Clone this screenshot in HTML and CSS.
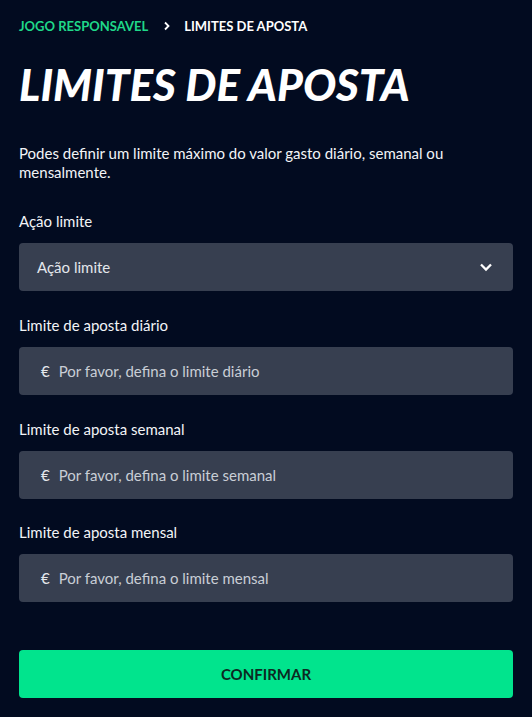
FILE: index.html
```html
<!DOCTYPE html>
<html lang="pt">
<head>
  <meta charset="UTF-8" />
  <meta name="viewport" content="width=device-width, initial-scale=1.0"/>
  <title>Limites de Aposta</title>
  <link rel="stylesheet" href="styles.css">
</head>
<body>

  <div class="page">
    <nav class="crumbs">
      <a href="#" class="crumb-link">Jogo Responsavel</a>
      <svg class="crumb-sep" width="10" height="10" viewBox="0 0 10 10">
        <path d="M3 1.5 L6.5 5 L3 8.5" fill="none" stroke="#ffffff" stroke-width="1.8"/>
      </svg>
      <span class="crumb-current">Limites de Aposta</span>
    </nav>

    <h1 class="title">Limites de Aposta</h1>

    <p class="intro">Podes definir um limite máximo do valor gasto diário, semanal ou mensalmente.</p>

    <form class="limits">
      <div class="field">
        <label class="field-label">Ação limite</label>
        <div class="select">
          <span>Ação limite</span>
          <svg width="14" height="14" viewBox="0 0 14 14">
            <path d="M2 4.5 L7 9.5 L12 4.5" fill="none" stroke="#ffffff" stroke-width="2.3"/>
          </svg>
        </div>
      </div>

      <div class="field">
        <label class="field-label">Limite de aposta diário</label>
        <div class="input">
          <span class="currency">€</span>
          <span class="placeholder">Por favor, defina o limite diário</span>
        </div>
      </div>

      <div class="field">
        <label class="field-label">Limite de aposta semanal</label>
        <div class="input">
          <span class="currency">€</span>
          <span class="placeholder">Por favor, defina o limite semanal</span>
        </div>
      </div>

      <div class="field">
        <label class="field-label">Limite de aposta mensal</label>
        <div class="input">
          <span class="currency">€</span>
          <span class="placeholder">Por favor, defina o limite mensal</span>
        </div>
      </div>

      <button type="button" class="confirm">Confirmar</button>
    </form>
  </div>

</body>
</html>
```

FILE: styles.css
```css
/* RESET & BASE */
* {
  box-sizing: border-box;
  margin: 0;
  padding: 0;
}

body {
  font-family: Lato, "Open Sans", sans-serif;
  background: #020b20;
  color: #ffffff;
}

.page {
  padding: 17px 19px 0 19px;
}

/* BREADCRUMB */
.crumbs {
  display: flex;
  align-items: center;
  height: 18px;
  font-size: 13px;
  font-weight: 700;
  text-transform: uppercase;
}

.crumb-link {
  color: #1fd889;
  text-decoration: none;
}

.crumb-sep {
  margin: 0 12px 0 14px;
}

.crumb-current {
  color: #ffffff;
}

/* TITLE */
.title {
  margin-top: 22px;
  font-size: 44px;
  line-height: 54px;
  font-weight: 900;
  font-style: italic;
  text-transform: uppercase;
  letter-spacing: 0;
}

.intro {
  margin-top: 33px;
  font-size: 15px;
  line-height: 19px;
  color: #f2f4f7;
}

/* FORM */
.limits {
  margin-top: 29px;
}

.field {
  margin-bottom: 24px;
}

.field:nth-child(3) {
  margin-bottom: 23px;
}

.field-label {
  display: block;
  font-size: 15px;
  line-height: 20px;
  margin-bottom: 12px;
  color: #f2f4f7;
}

.select,
.input {
  display: flex;
  align-items: center;
  height: 48px;
  background: #373f50;
  border-radius: 4px;
  font-size: 15px;
}

.select {
  justify-content: space-between;
  padding: 0 20px 0 18px;
  color: #e4e7ec;
}

.input {
  padding: 0 22px;
}

.currency {
  color: #e4e7ec;
  margin-right: 9px;
}

.placeholder {
  color: #c9ced6;
}

.confirm {
  display: block;
  width: 100%;
  height: 48px;
  margin-top: 48px;
  background: #01e48d;
  border: none;
  border-radius: 4px;
  color: #0c2a22;
  font-family: Lato, sans-serif;
  font-size: 15px;
  font-weight: 700;
  text-transform: uppercase;
}
```
